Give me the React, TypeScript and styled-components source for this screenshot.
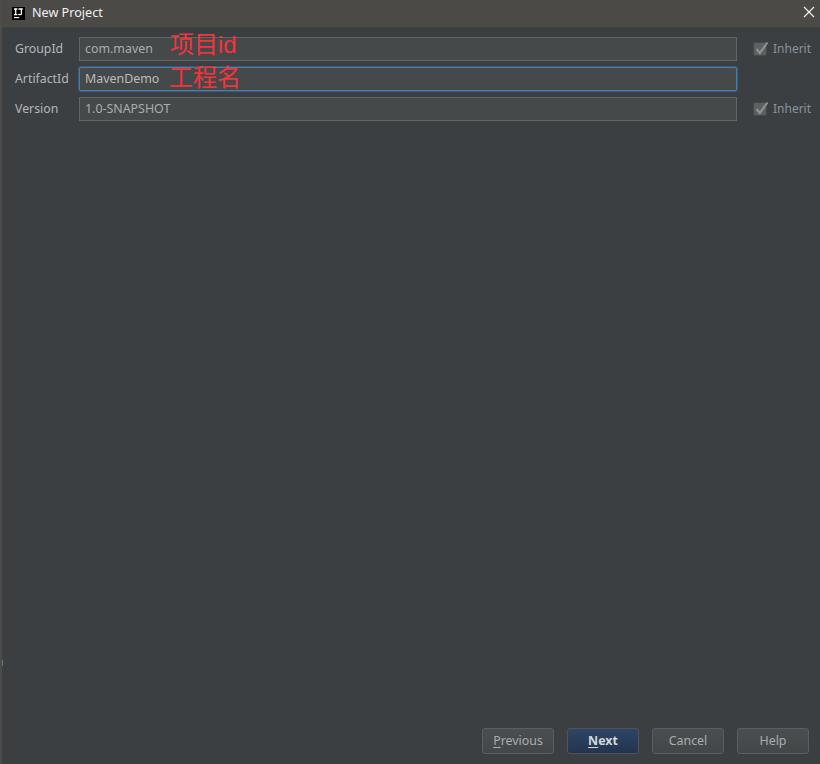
import React from "react";
import styled, { createGlobalStyle } from "styled-components";

const Global = createGlobalStyle`
  html, body { margin: 0; padding: 0; background: #3c3f41; }
  body { font-family: "Noto Sans", "Liberation Sans", "Noto Sans CJK SC", sans-serif; }
`;

const Window = styled.div`
  width: 820px; height: 764px; box-sizing: border-box;
  display: flex; flex-direction: column;
  background: #3c3f41; position: relative; overflow: hidden;
  border-left: 2px solid #4d4c4a;
`;
const TitleBar = styled.div`
  height: 27px; flex: none; display: flex; align-items: center;
  background: #4b4a47; padding: 0 4px 0 10px; gap: 7px;
  color: #f0f0f0; font-size: 12.6px;
`;
const Logo = styled.div`
  width: 13px; height: 13px; background: #000; flex: none; display: flex;
`;
const TitleText = styled.span`flex: 1; position: relative; top: -1px;`;
const CloseButton = styled.div`width: 14px; height: 14px; display: flex; margin-bottom: 3px;`;
const Form = styled.div`
  display: grid; grid-template-columns: 64px 658px auto;
  column-gap: 0; row-gap: 6px; align-items: center;
  padding: 10px 0 0 13px;
`;
const Label = styled.label`color: #b4b7b9; font-size: 12.3px; position: relative; top: -1px;`;
const Field = styled.div<{ $focused?: boolean }>`
  height: 24px; box-sizing: border-box; display: flex; align-items: center;
  padding: 0 5px 2px; font-size: 12.4px; background: #45494a;
  color: ${p => (p.$focused ? "#bbbbbb" : "#a9adae")};
  border: 1px solid ${p => (p.$focused ? "#4a7cae" : "#646464")};
  border-radius: ${p => (p.$focused ? "2px" : "0")};
  box-shadow: ${p => (p.$focused ? "0 0 0 1px #3d5a78" : "none")};
`;
const Inherit = styled.div`
  display: flex; align-items: center; gap: 6px; margin-left: 16px;
  color: #87929b; font-size: 12px;
`;
const Box = styled.div`
  width: 14px; height: 14px; position: relative;
  background: #5d6061; border: 1px solid #46484a; box-sizing: border-box; border-radius: 2px;
  svg { position: absolute; left: -1px; top: -3px; }
`;
const InheritLabel = styled.span`position: relative; top: -1px;`;
const Spacer = styled.div`flex: 1;`;
const Footer = styled.div`
  display: flex; justify-content: flex-end; gap: 13px;
  padding: 0 11px 10px 0;
`;
const Button = styled.div<{ $primary?: boolean }>`
  width: 72px; height: 26px; box-sizing: border-box; border-radius: 3px;
  display: flex; align-items: center; justify-content: center; font-size: 12.4px;
  padding-bottom: 1px;
  font-weight: ${p => (p.$primary ? 700 : 400)};
  color: ${p => (p.$primary ? "#d4d8dc" : "#a9adae")};
  border: 1px solid ${p => (p.$primary ? "#50545a" : "#5a5e60")};
  background: ${p =>
    p.$primary ? "linear-gradient(#2e4565, #23344f)" : "linear-gradient(#4a4e50, #434749)"};
  u { text-underline-offset: 2px; }
`;
const Annotation = styled.div<{ $left: number; $top: number }>`
  position: absolute; left: ${p => p.$left}px; top: ${p => p.$top}px;
  color: #f4343c; font-size: 24px; line-height: 28px; white-space: nowrap;
  font-family: "Liberation Sans", "Noto Sans CJK SC", sans-serif;
`;
const Mark = styled.div`
  position: absolute; left: -2px; top: 660px; width: 3px; height: 6px;
  background: #5e7d5a;
`;

const Inh = () => (
  <Inherit>
    <Box>
      <svg width="16" height="17" viewBox="0 0 16 17">
        <path d="M3.5 9 L6.8 13 L14.5 2.5" fill="none" stroke="#8f9395" strokeWidth="2" />
      </svg>
    </Box>
    <InheritLabel>Inherit</InheritLabel>
  </Inherit>
);

export default function App() {
  return (
    <>
      <Global />
      <Window>
        <TitleBar>
          <Logo>
            <svg width="13" height="13" viewBox="0 0 13 13">
              <path d="M2 2h3.4M3.7 2v5.6M2 7.6h3.4M6.5 2h4.2M9.4 2v4.4c0 1-.7 1.3-1.4 1.3S6.8 7.3 6.5 6.8" fill="none" stroke="#fff" strokeWidth="1.3" />
              <path d="M2 10.6h5.2" stroke="#fff" strokeWidth="1.1" />
            </svg>
          </Logo>
          <TitleText>New Project</TitleText>
          <CloseButton>
            <svg width="14" height="14" viewBox="0 0 14 14">
              <path d="M2 2L12 12M12 2L2 12" stroke="#f0f0f0" strokeWidth="1.2" />
            </svg>
          </CloseButton>
        </TitleBar>
        <Form>
          <Label>GroupId</Label>
          <Field>com.maven</Field>
          <Inh />
          <Label>ArtifactId</Label>
          <Field $focused>MavenDemo</Field>
          <div />
          <Label>Version</Label>
          <Field>1.0-SNAPSHOT</Field>
          <Inh />
        </Form>
        <Spacer />
        <Footer>
          <Button><span><u>P</u>revious</span></Button>
          <Button $primary><span><u>N</u>ext</span></Button>
          <Button>Cancel</Button>
          <Button>Help</Button>
        </Footer>
        <Annotation $left={168} $top={31}>项目id</Annotation>
        <Annotation $left={167} $top={64}>工程名</Annotation>
        <Mark />
      </Window>
    </>
  );
}
